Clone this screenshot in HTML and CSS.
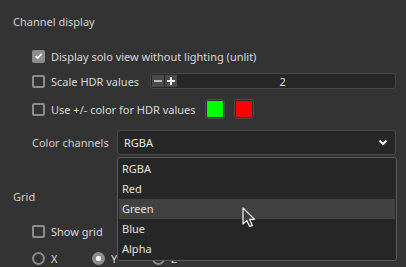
FILE: index.html
```html
<!DOCTYPE html>
<html>
<head>
<meta charset="utf-8">
<link rel="stylesheet" href="styles.css">
</head>
<body>
<div class="panel">
  <div class="title">Channel display</div>
  <div class="row r1">
    <span class="check on"><svg width="10" height="10" viewBox="0 0 10 10"><polyline points="1.8,5.2 4,7.4 8.3,2.6" fill="none" stroke="#fff" stroke-width="1.8"/></svg></span>
    <span class="lbl">Display solo view without lighting (unlit)</span>
  </div>
  <div class="row r2">
    <span class="check"></span>
    <span class="lbl">Scale HDR values</span>
    <div class="spin">
      <span class="sbtn"><svg width="10" height="10" viewBox="0 0 10 10"><rect x="1" y="4" width="8" height="2" fill="#bdbdbd"/></svg></span>
      <span class="sbtn"><svg width="10" height="10" viewBox="0 0 10 10"><rect x="1" y="4" width="8" height="2" fill="#f0f0f0"/><rect x="4" y="1" width="2" height="8" fill="#f0f0f0"/></svg></span>
      <span class="sval">2</span>
    </div>
  </div>
  <div class="row r3">
    <span class="check"></span>
    <span class="lbl">Use +/- color for HDR values</span>
    <span class="swatch"><span class="fill green"></span></span>
    <span class="swatch"><span class="fill red"></span></span>
  </div>
  <div class="row r4">
    <span class="flabel">Color channels</span>
    <div class="option">
      <span>RGBA</span>
      <svg width="10" height="7" viewBox="0 0 10 7"><polyline points="1.5,1.5 5,5 8.5,1.5" fill="none" stroke="#f2f2f2" stroke-width="2"/></svg>
    </div>
  </div>
  <div class="title t2">Grid</div>
  <div class="row r5">
    <span class="check"></span>
    <span class="lbl">Show grid</span>
  </div>
  <div class="row r6">
    <span class="radio-item"><span class="radio"></span><span class="lbl">X</span></span>
    <span class="radio-item"><span class="radio on"></span><span class="lbl">Y</span></span>
    <span class="radio-item"><span class="radio"></span><span class="lbl">Z</span></span>
  </div>
</div>

<div class="popup">
  <div class="item">RGBA</div>
  <div class="item">Red</div>
  <div class="item hover">Green</div>
  <div class="item">Blue</div>
  <div class="item">Alpha</div>
</div>

<svg class="cursor" width="15" height="22" viewBox="0 0 15 22"><path d="M1,1 V17 L4.8,13.4 L7.6,19.6 L10.4,18.4 L7.7,12.4 H12.6 Z" fill="#3c3c3c" stroke="#f4f4f4" stroke-width="1.2" stroke-linejoin="round"/></svg>
</body>
</html>
```

FILE: styles.css
```css
html, body {
  margin: 0;
  padding: 0;
  background: #333333;
  width: 406px;
  height: 267px;
  overflow: hidden;
}
body {
  font-family: "Noto Sans", "DejaVu Sans", sans-serif;
  font-size: 11px;
  color: #d8d8d8;
  position: relative;
}
.panel {
  padding: 0 10px 0 13px;
}
.title {
  height: 44px;
  line-height: 44px;
  color: #cfcfcf;
}
.t2 {
  margin-top: 30px;
  height: 24px;
  line-height: 24px;
}
.row {
  display: flex;
  align-items: center;
  padding-left: 19px;
}
.r1 { height: 24px; }
.r2 { height: 26px; }
.r3 { height: 30px; }
.r4 { height: 25px; margin-top: 6px; align-items: stretch; }
.r5 { height: 24px; margin-top: 10px; }
.r6 { height: 30px; }
.check {
  width: 13px;
  height: 13px;
  box-sizing: border-box;
  border: 2px solid #8c8c8c;
  border-radius: 2px;
  margin-right: 6px;
  flex: none;
  display: flex;
  align-items: center;
  justify-content: center;
}
.check.on {
  background: #8c8c8c;
  border-color: #8c8c8c;
}
.lbl {
  white-space: nowrap;
}
.spin {
  flex: 1;
  margin-left: 11px;
  height: 16px;
  box-sizing: border-box;
  background: #262626;
  border: 1px solid #474747;
  border-radius: 3px;
  display: flex;
  align-items: center;
  padding-left: 1px;
  gap: 1px;
}
.sbtn {
  width: 12px;
  height: 12px;
  background: #4a4a4a;
  display: flex;
  align-items: center;
  justify-content: center;
  flex: none;
}
.sval {
  flex: 1;
  text-align: center;
  padding-right: 8px;
  color: #e0e0e0;
}
.swatch {
  width: 20px;
  height: 20px;
  box-sizing: border-box;
  border: 1px solid #4d4d4d;
  border-radius: 3px;
  background: #2a2a2a;
  padding: 1px;
  margin-left: 9px;
  flex: none;
  display: flex;
}
.fill { flex: 1; }
.green { background: #00ff00; }
.red { background: #ff0000; }
.flabel {
  width: 85px;
  display: flex;
  align-items: center;
  color: #cccccc;
  flex: none;
}
.option {
  flex: 1;
  box-sizing: border-box;
  background: #262626;
  border: 1px solid #4a4a4a;
  border-radius: 3px;
  display: flex;
  align-items: center;
  justify-content: space-between;
  padding: 0 7px 0 6px;
  color: #e6e6e6;
}
.radio-item {
  width: 60px;
  display: flex;
  align-items: center;
  flex: none;
}
.radio {
  width: 13px;
  height: 13px;
  box-sizing: border-box;
  border: 2px solid #8c8c8c;
  border-radius: 50%;
  margin-right: 6px;
  flex: none;
}
.radio.on {
  border: none;
  background: radial-gradient(circle, #f4f4f4 0 2.5px, #8c8c8c 3px);
}
.popup {
  position: absolute;
  left: 117px;
  top: 157px;
  width: 280px;
  box-sizing: border-box;
  background: #262626;
  border: 1px solid #595959;
  border-radius: 3px;
  padding: 1px;
}
.item {
  height: 20px;
  line-height: 20px;
  padding-left: 3px;
  color: #e0e0e0;
}
.item.hover {
  background: #414141;
}
.cursor {
  position: absolute;
  left: 242px;
  top: 207px;
}
```
